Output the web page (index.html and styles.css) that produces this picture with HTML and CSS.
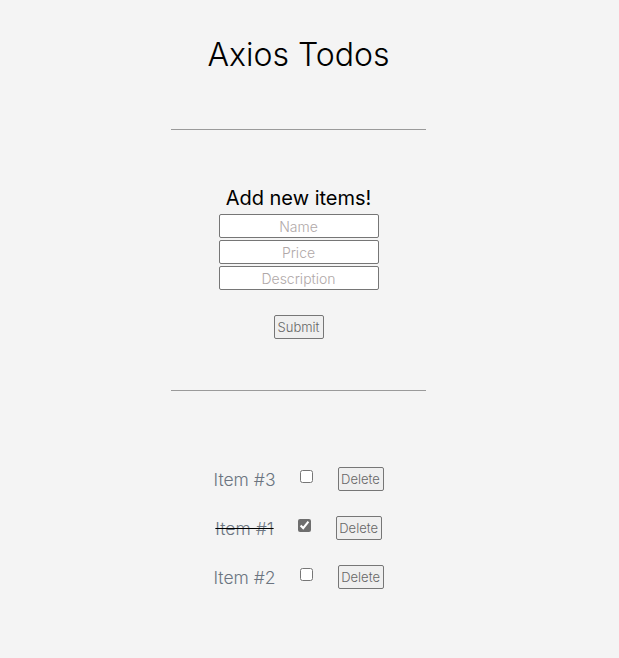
FILE: index.html
```html
<!DOCTYPE html>
<html>
<head>
<meta charset="utf-8">
<link rel="stylesheet" href="styles.css">
</head>
<body>
<div class="app">
  <h1 class="title">Axios Todos</h1>
  <hr class="rule">
  <form class="add-form">
    <h2 class="form-title">Add new items!</h2>
    <input class="field" type="text" placeholder="Name">
    <input class="field" type="text" placeholder="Price">
    <input class="field" type="text" placeholder="Description">
    <button class="submit" type="button">Submit</button>
  </form>
  <hr class="rule rule-low">
  <div class="list">
    <div class="row">
      <span class="item-name">Item #3</span>
      <input class="check" type="checkbox">
      <button class="del" type="button">Delete</button>
    </div>
    <div class="row">
      <span class="item-name done">Item #1</span>
      <input class="check" type="checkbox" checked>
      <button class="del" type="button">Delete</button>
    </div>
    <div class="row">
      <span class="item-name">Item #2</span>
      <input class="check" type="checkbox">
      <button class="del" type="button">Delete</button>
    </div>
  </div>
</div>
</body>
</html>
```
FILE: styles.css
```css
html, body {
  margin: 0;
  background: #f4f4f4;
}
body {
  font-family: "Inter", "Lato", sans-serif;
  font-weight: 300;
  color: #000;
}
.app {
  width: 597px;
  display: flex;
  flex-direction: column;
  align-items: center;
}
.title {
  font-size: 32px;
  font-weight: 300;
  margin: 33px 0 0;
  line-height: 44px;
}
.rule {
  width: 255px;
  border: none;
  border-top: 1px solid #9a9a9a;
  margin: 52px 0 0;
  height: 0;
}
.rule-low {
  margin-top: 51px;
}
.add-form {
  display: flex;
  flex-direction: column;
  align-items: center;
  margin-top: 56px;
}
.form-title {
  font-size: 20px;
  font-weight: 400;
  margin: 0 0 3px;
  line-height: 25px;
}
.field {
  width: 160px;
  height: 24px;
  box-sizing: border-box;
  border: 1px solid #767676;
  border-radius: 2px;
  background: #fff;
  margin: 0 0 2px;
  font-family: inherit;
  font-weight: 300;
  font-size: 14px;
  text-align: center;
  padding: 0;
}
.field::placeholder {
  color: #b0a8a8;
}
.submit {
  margin-top: 23px;
  width: 50px;
  height: 24px;
  padding: 0;
  font-family: inherit;
  font-weight: 300;
  font-size: 13px;
  color: #666;
  background: #efefef;
  border: 1px solid #767676;
  border-radius: 2px;
}
.list {
  margin-top: 76px;
  display: flex;
  flex-direction: column;
  align-items: center;
  gap: 25px;
}
.row {
  display: flex;
  align-items: center;
  height: 24px;
}
.item-name {
  font-size: 17.5px;
  color: #6b7480;
  margin-right: 24px;
}
.item-name.done {
  text-decoration: line-through;
  text-decoration-color: #000;
}
.check {
  width: 13px;
  height: 13px;
  margin: 0 25px 5px 0;
  accent-color: #6e6e6e;
}
.del {
  width: 46px;
  height: 24px;
  padding: 0;
  font-family: inherit;
  font-weight: 300;
  font-size: 13px;
  color: #666;
  background: #efefef;
  border: 1px solid #767676;
  border-radius: 2px;
}
```
